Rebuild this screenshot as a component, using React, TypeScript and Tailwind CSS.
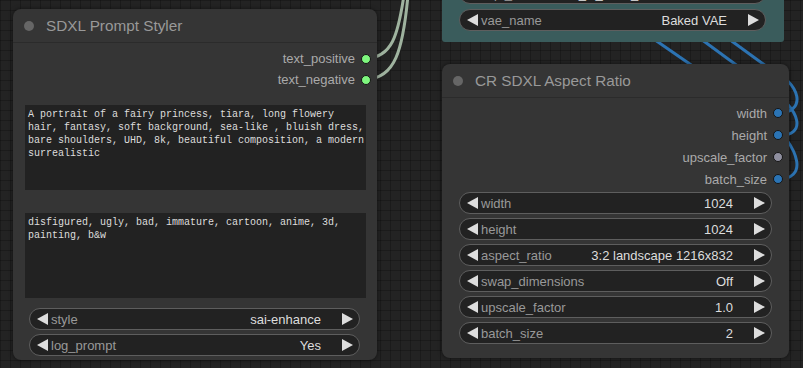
import React from "react";

const sans = "font-['Liberation_Sans',Arial,sans-serif]";

const Arrow = ({ dir }: { dir: "left" | "right" }) => (
  <svg width="11" height="12" viewBox="0 0 11 12" className="shrink-0">
    <polygon
      points={dir === "left" ? "11,0 11,12 0,6" : "0,0 0,12 11,6"}
      fill="#dddddd"
    />
  </svg>
);

const Widget = ({
  label,
  value,
  width,
}: {
  label: string;
  value: string;
  width: string;
}) => (
  <div
    className={`flex h-[22px] shrink-0 items-center rounded-full border border-[#5e5e5e] bg-[#222222] pl-[7px] pr-[6px] leading-none ${width}`}
  >
    <Arrow dir="left" />
    <span className="ml-[3px] text-[13px] text-[#999999]">{label}</span>
    <span className="ml-auto mr-[21px] text-[13px] text-[#dddddd]">
      {value}
    </span>
    <Arrow dir="right" />
  </div>
);

const Output = ({
  label,
  color,
  height,
}: {
  label: string;
  color: string;
  height: string;
}) => (
  <div
    className={`flex items-center justify-end gap-[6px] pr-[6px] leading-none ${height}`}
  >
    <span className="text-[13px] text-[#aaaaaa]">{label}</span>
    <span
      className={`h-[10px] w-[10px] rounded-full border border-[#151515] ${color}`}
    />
  </div>
);

const Title = ({ text }: { text: string }) => (
  <div className="flex h-[34px] shrink-0 items-center border-b border-[#2b2b2b] pl-[11px]">
    <span className="h-[10px] w-[10px] rounded-full bg-[#666666]" />
    <span className="ml-[12px] text-[15.3px] leading-none text-[#999999]">
      {text}
    </span>
  </div>
);

const Prompt = ({ text, className }: { text: string; className: string }) => (
  <textarea
    readOnly
    wrap="off"
    spellCheck={false}
    value={text}
    className={`ml-[12px] block h-[85px] w-[341px] resize-none overflow-hidden bg-[#222222] px-[3px] pt-[3px] font-['Liberation_Mono','DejaVu_Sans_Mono',monospace] text-[10px] leading-[13px] text-[#dddddd] outline-none ${className}`}
  />
);

const positive =
  "A portrait of a fairy princess, tiara, long flowery\nhair, fantasy, soft background, sea-like , bluish dress,\nbare shoulders, UHD, 8k, beautiful composition, a modern\nsurrealistic";
const negative =
  "disfigured, ugly, bad, immature, cartoon, anime, 3d,\npainting, b&w";

export default function App() {
  return (
    <div
      className={`relative h-[368px] w-[803px] overflow-hidden bg-[#232323] bg-[linear-gradient(to_right,rgba(0,0,0,0.22)_1px,transparent_1px),linear-gradient(to_bottom,rgba(0,0,0,0.22)_1px,transparent_1px)] bg-size-[10px_10px] ${sans}`}
    >
      {/* links */}
      <svg
        width="803"
        height="368"
        className="absolute left-0 top-0"
        fill="none"
        strokeWidth="3"
        strokeLinecap="round"
      >
        <path d="M366 58 C392 58, 398 35, 404 -5" stroke="#9fb39f" />
        <path d="M366 79 C395 79, 403 50, 408 -5" stroke="#9fb39f" />
        <path
          d="M778 113 C806 113, 804 84, 766 66 L733 42 L700 18"
          stroke="#2c73b2"
        />
        <path
          d="M778 135 C806 137, 804 110, 765 86 L705 42 L680 24"
          stroke="#2c73b2"
        />
        <path
          d="M778 179 C806 179, 804 152, 765 116 L658 42 L630 23"
          stroke="#2c73b2"
        />
      </svg>

      {/* VAE loader, cut off at the top */}
      <div className="absolute left-[442px] top-[-40px] flex h-[82px] w-[342px] flex-col justify-end gap-[5px] rounded-b-[3px] bg-[#3a5c5c] pb-[11px] pl-[17px]">
        <Widget label="ckpt_name" value="sd_xl_base_1.0.safetensors" width="w-[307px]" />
        <Widget label="vae_name" value="Baked VAE" width="w-[307px]" />
      </div>

      {/* SDXL Prompt Styler */}
      <div className="absolute left-[13px] top-[9px] flex h-[351px] w-[364px] flex-col rounded-lg bg-[#353535] shadow-[0_0_4px_rgba(0,0,0,0.5)]">
        <Title text="SDXL Prompt Styler" />
        <div className="pt-[5px]">
          <Output label="text_positive" color="bg-[#7ef77e]" height="h-[21px]" />
          <Output label="text_negative" color="bg-[#7ef77e]" height="h-[21px]" />
        </div>
        <Prompt text={positive} className="mt-[15px]" />
        <Prompt text={negative} className="mt-[23px]" />
        <div className="ml-[16px] mt-[10px] flex flex-col gap-[4px]">
          <Widget label="style" value="sai-enhance" width="w-[331px]" />
          <Widget label="log_prompt" value="Yes" width="w-[331px]" />
        </div>
      </div>

      {/* CR SDXL Aspect Ratio */}
      <div className="absolute left-[442px] top-[64px] flex h-[294px] w-[347px] flex-col rounded-lg bg-[#353535] shadow-[0_0_4px_rgba(0,0,0,0.5)]">
        <Title text="CR SDXL Aspect Ratio" />
        <div className="pt-[4px]">
          <Output label="width" color="bg-[#2b74b5]" height="h-[22px]" />
          <Output label="height" color="bg-[#2b74b5]" height="h-[22px]" />
          <Output label="upscale_factor" color="bg-[#8f8f9f]" height="h-[22px]" />
          <Output label="batch_size" color="bg-[#2b74b5]" height="h-[22px]" />
        </div>
        <div className="ml-[17px] mt-[2px] flex flex-col gap-[4px]">
          <Widget label="width" value="1024" width="w-[313px]" />
          <Widget label="height" value="1024" width="w-[313px]" />
          <Widget
            label="aspect_ratio"
            value="3:2 landscape 1216x832"
            width="w-[313px]"
          />
          <Widget label="swap_dimensions" value="Off" width="w-[313px]" />
          <Widget label="upscale_factor" value="1.0" width="w-[313px]" />
          <Widget label="batch_size" value="2" width="w-[313px]" />
        </div>
      </div>
    </div>
  );
}
